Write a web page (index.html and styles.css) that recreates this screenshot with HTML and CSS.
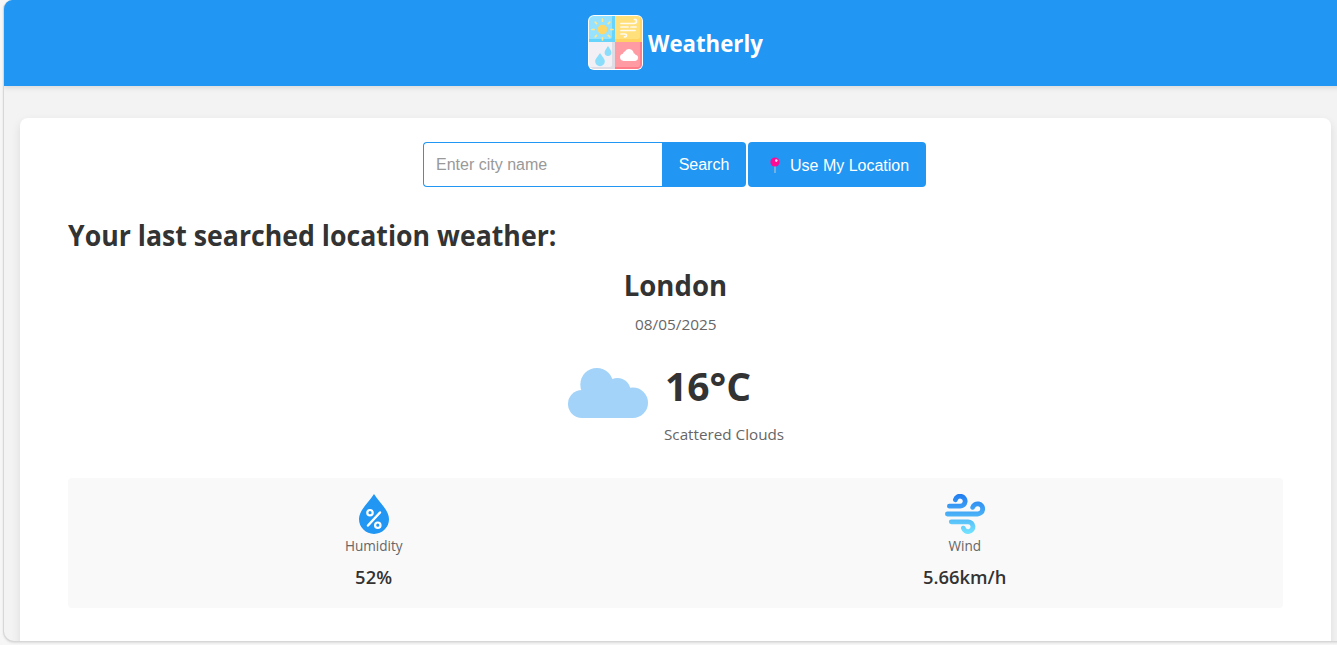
FILE: index.html
```html
<!DOCTYPE html>
<html lang="en">
<head>
<meta charset="utf-8">
<title>Weatherly</title>
<link rel="stylesheet" href="styles.css">
</head>
<body>
<div class="window">
  <header class="header">
    <svg class="logo" viewBox="0 0 55 55">
      <defs><clipPath id="tile"><rect x="1" y="1" width="53" height="53" rx="5"/></clipPath></defs>
      <rect width="55" height="55" rx="6" fill="#fff"/>
      <g clip-path="url(#tile)">
        <path fill="#97e3ff" d="M0 0h27v27H0z"/><path fill="#66d4fb" d="M24 0h3v27H0v-3h22q2 0 2-2z"/>
        <path fill="#ffe07a" d="M27 0h28v27H27z"/><path fill="#ffd262" d="M52 0h3v27H27v-3h23q2 0 2-2z"/>
        <path fill="#f2f0f5" d="M0 27h27v28H0z"/><path fill="#dedce5" d="M24 27h3v28H0v-3h22q2 0 2-2z"/>
        <path fill="#ff9ba2" d="M27 27h28v28H27z"/><path fill="#ff7d88" d="M52 27h3v28H27v-3h23q2 0 2-2z"/>
      </g>
      <circle cx="14.5" cy="14.5" r="4.8" fill="#ffd767"/>
      <path d="M14.5 4v2.2M14.5 22.8V25M4 14.5h2.2M22.8 14.5H25M7.2 7.2l1.5 1.5M20.3 20.3l1.5 1.5M7.2 21.8l1.5-1.5M20.3 8.700l1.5-1.5" fill="none" stroke="#ffe58c" stroke-width="1.7" stroke-linecap="round"/>
      <path d="M33 8.500h13q2.500 0 2.500-2.200T46.500 4.500M33 12h7M43 12h5M33 15.500h14M33 19h3.500q2 0 2 1.500t-2 1.300" fill="none" stroke="#fffaf0" stroke-width="1.700" stroke-linecap="round"/>
      <path fill="#8addfb" d="M20 31c1.500 2.500 3.400 4.600 3.400 6.500a3.400 3.400 0 0 1-6.800 0c0-1.900 1.900-4 3.400-6.500zM12 38c2 3.400 4.800 5.600 4.800 8.400a4.800 4.800 0 0 1-9.600 0C7.200 43.600 10 41.400 12 38z"/>
      <path fill="#fff" d="M35.500 46a3.700 3.700 0 0 1-.6-7.300 3.500 3.500 0 0 1 2.200-2.500 4.700 4.700 0 0 1 8.600 2.100 2.500 2.500 0 0 1 1.800 1.400 3.200 3.200 0 0 1-.2 6.300z"/>
    </svg>
    <h1 class="brand"><span>Weatherly</span></h1>
  </header>
  <main class="card">
    <form class="search">
      <input class="search-input" type="text" placeholder="Enter city name">
      <button class="search-button" type="button">Search</button>
      <button class="location-button" type="button">
        <svg class="pin" viewBox="0 0 12 18"><path d="M6 8v8" stroke="#8db9d8" stroke-width="1.500"/><circle cx="6" cy="5" r="4.600" fill="#ff0a94"/><circle cx="7.300" cy="3.600" r="1.300" fill="#ffd3ee"/></svg>
        <span>Use My Location</span>
      </button>
    </form>
    <h2 class="title"><span>Your last searched location weather:</span></h2>
    <h2 class="city"><span>London</span></h2>
    <p class="date"><span>08/05/2025</span></p>
    <section class="current">
      <svg class="cloud" viewBox="0 0 80 50"><g fill="#a3d3f8"><circle cx="14" cy="36" r="14"/><circle cx="28.800" cy="16.500" r="16.500"/><circle cx="49.500" cy="23" r="13"/><circle cx="64.800" cy="34.800" r="15.200"/><path d="M14 22h50.800v28H14z"/></g></svg>
      <div class="reading">
        <p class="temp"><span>16°C</span></p>
        <p class="condition"><span>Scattered Clouds</span></p>
      </div>
    </section>
    <section class="details">
      <div class="detail">
        <svg class="detail-icon" viewBox="0 0 40 40"><path fill="#2196f3" d="M20 0c5 8 15 16 15 25a15 15 0 0 1-30 0C5 16 15 8 20 0z"/><path d="M26 18.500 14 31.500" stroke="#fff" stroke-width="2.500" stroke-linecap="round"/><g fill="none" stroke="#fff" stroke-width="2.200"><circle cx="16" cy="18.700" r="2.700"/><circle cx="23.800" cy="31.200" r="2.700"/></g></svg>
        <p class="label"><span>Humidity</span></p>
        <p class="value"><span>52%</span></p>
      </div>
      <div class="detail">
        <svg class="detail-icon" viewBox="0 0 40 40"><defs><linearGradient id="air" gradientUnits="userSpaceOnUse" x1="0" y1="0" x2="0" y2="40"><stop offset="0" stop-color="#207cf0"/><stop offset=".5" stop-color="#48aef6"/><stop offset="1" stop-color="#75e5ff"/></linearGradient></defs><g fill="none" stroke="url(#air)" stroke-width="4.800" stroke-linecap="round"><path d="M4.400 12.200H15a5 5 0 1 0-4.600-6.500"/><path d="M2.400 20h30a5.100 5.100 0 1 0-4.700-6.600"/><path d="M6.300 27.800H23a4.900 4.900 0 1 1-4.600 6.300"/></g></svg>
        <p class="label"><span>Wind</span></p>
        <p class="value"><span>5.66km/h</span></p>
      </div>
    </section>
  </main>
</div>
</body>
</html>
```
FILE: styles.css
```css
* { box-sizing: border-box; }
html, body { height: 100%; overflow: hidden; }
body { margin: 0; background: #f6f6f6; color: #333; font-family: "Open Sans", "Noto Sans", sans-serif; }
h1, h2, p { margin: 0; white-space: nowrap; }
h1 span, h2 span, p span { display: inline-block; }
.window {
  height: 642px; margin: 0 -12px 0 3px; overflow: hidden;
  background: #f3f3f3; border: solid #d7d7d7; border-width: 0 0 1px 1px;
  border-radius: 9px 0 0 11px; box-shadow: 0 1px 2px #ddd;
}
.header {
  width: 1345px; height: 86px; padding: 0 2px 1px 0; display: flex; align-items: center; justify-content: center; gap: 5px;
  background: #2196f3; color: #fff; box-shadow: 0 2px 5px rgba(0,0,0,.1);
}
.logo { width: 55px; height: 55px; }
.brand { width: 115px; font-size: 24px; line-height: 32px; font-weight: 700; }
.brand span { transform: scaleX(.925); transform-origin: left; }
.card {
  width: 1311px; height: 560px; margin: 32px 0 0 16px; padding: 24px 48px;
  background: #fff; border-radius: 8px; box-shadow: 0 4px 10px rgba(0,0,0,.1);
}
.search { height: 45px; margin-left: -2px; display: flex; justify-content: center; }
.search-input { width: 240px; padding: 0 12px; border: 1px solid #2196f3; border-right: 0; border-radius: 4px 0 0 4px; font: 16px "Liberation Sans", Arial, sans-serif; background: #fff; }
.search-input::placeholder { color: #999; }
.search-button, .location-button { border: 0; padding: 0; background: #2196f3; color: #fff; font: 16px "Liberation Sans", Arial, sans-serif; }
.search-button { width: 84px; border-radius: 0 4px 4px 0; margin-left: -1px; }
.location-button { width: 178px; margin-left: 2px; border-radius: 4px; display: flex; align-items: center; padding: 2px 0 0 21px; }
.pin { width: 12px; height: 18px; margin-right: 9px; }
.title { margin-top: 28px; font-size: 29px; line-height: 40px; }
.title span { transform: scaleX(.92); transform-origin: left; }
.city { margin-top: 10px; font-size: 29px; line-height: 40px; text-align: center; }
.city span { transform: scaleX(.95); }
.date { margin-top: 8px; color: #666; font-size: 15px; line-height: 22px; text-align: center; }
.date span { transform: scaleX(1.025); }
.current { height: 97px; margin-top: 25px; display: flex; justify-content: center; gap: 16px; }
.cloud { width: 80px; height: 50px; margin-top: 8px; }
.reading { width: 120px; }
.temp { padding-left: 1px; font-size: 40px; font-weight: 700; line-height: 52px; }
.temp span { transform: scaleX(.975); transform-origin: left; }
.condition { margin-top: 11px; color: #666; font-size: 15px; line-height: 22px; }
.condition span { transform: scaleX(1.015); transform-origin: left; }
.details { height: 130px; margin-top: 21px; padding: 16px 23px 16px 10px; display: flex; background: #f9f9f9; border-radius: 4px; }
.detail { flex: 1; display: flex; flex-direction: column; align-items: center; }
.detail-icon { width: 40px; height: 40px; }
.label { margin-top: 2px; color: #666; font-size: 14px; line-height: 20px; }
.label span { transform: scaleX(.97); }
.value { margin-top: 8px; font-size: 17.5px; font-weight: 600; line-height: 26px; }
.value span { transform: scaleX(1.05); }
```
